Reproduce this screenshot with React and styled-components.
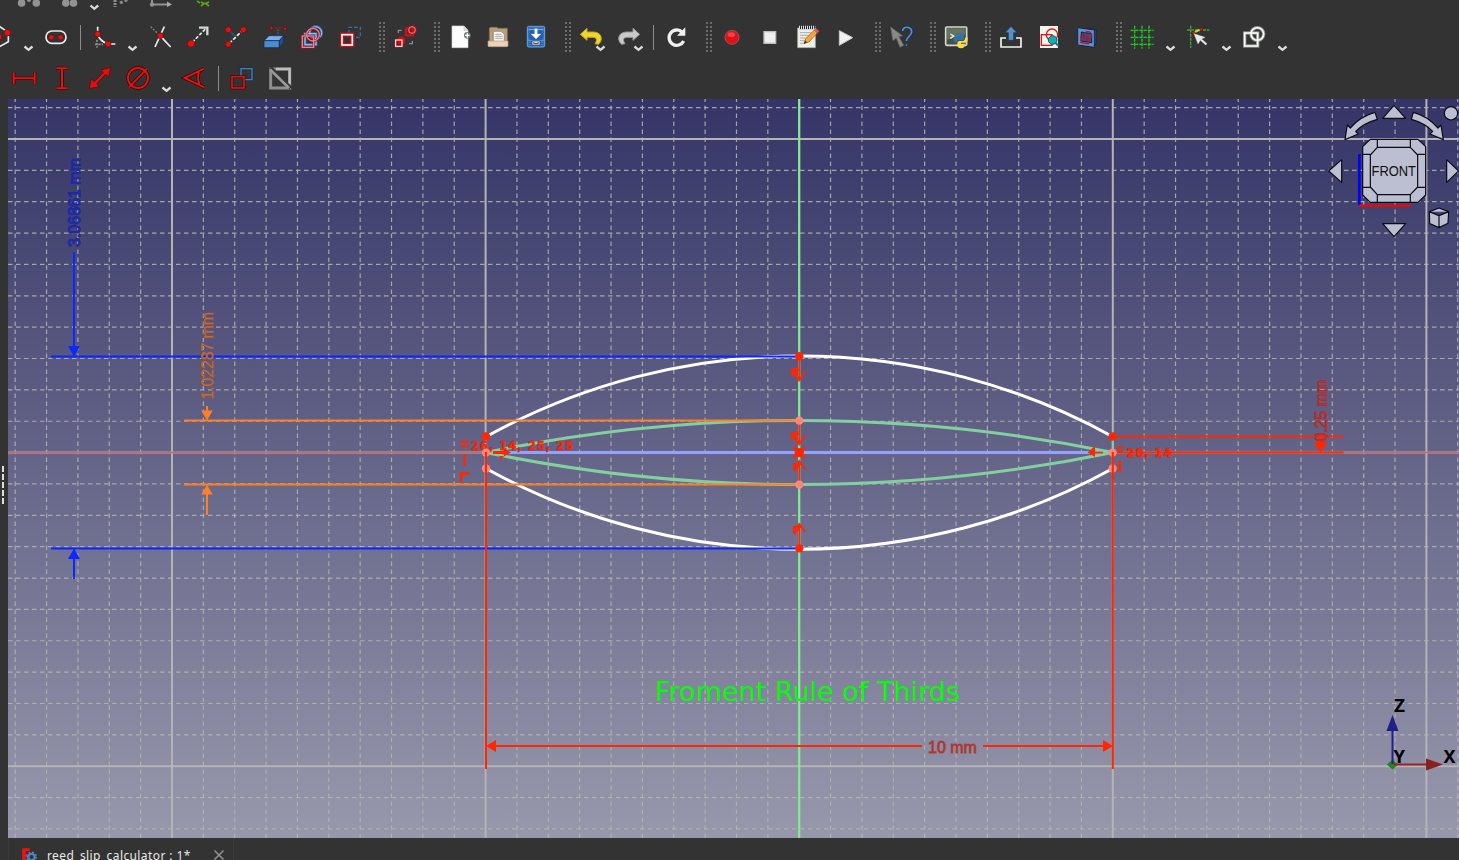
import React from "react";
import styled, { createGlobalStyle } from "styled-components";

const GlobalStyle = createGlobalStyle`
  body { margin: 0; background: #333333; overflow: hidden; }
  #root { height: 100vh; }
`;

const Window = styled.div`
  height: 860px;
  width: 1459px;
  overflow: hidden;
  display: flex;
  flex-direction: column;
  background: #333333;
  font-family: "Noto Sans", "Open Sans", sans-serif;
`;
const ToolBars = styled.header`
  display: flex;
  flex-direction: column;
  flex: 0 0 99px;
`;
const ToolRow = styled.div`
  display: flex;
  align-items: center;
  height: ${(p) => p.$height}px;
  margin-left: ${(p) => p.$start || 0}px;
  flex: none;
`;
const ToolButton = styled.span`
  position: relative;
  display: block;
  width: 38px;
  height: 38px;
  flex: none;
  svg { display: block; width: 38px; height: 38px; }
`;
const ClippedButton = styled.span`
  width: 38px;
  height: 17px;
  flex: none;
  margin-left: ${(p) => p.$gap || 0}px;
  svg { display: block; width: 38px; height: 17px; }
`;
const MenuArrow = styled.span`
  width: 18px;
  height: 29px;
  display: flex;
  align-items: flex-end;
  justify-content: center;
  flex: none;
  svg { width: 11px; height: 8px; }
`;
const BadgeArrow = styled.span`
  position: absolute;
  right: 4px;
  bottom: 4px;
  width: 11px;
  height: 8px;
  svg { display: block; width: 11px; height: 8px; }
`;
const Separator = styled.span`
  flex: none;
  width: 10px;
  display: flex;
  justify-content: center;
  &::after { content: ""; width: 1px; height: 25px; background: #8c8c8c; }
`;
const Handle = styled.span`
  flex: none;
  width: 6px;
  height: 30px;
  margin: 0 1px 0 10px;
  background: radial-gradient(circle at 1px 1px, #6c6c6c 1px, transparent 1.4px) 0 0 / 4px 4px;
`;
const Main = styled.main`
  display: flex;
  flex: 0 0 739px;
`;
const Splitter = styled.aside`
  flex: 0 0 8px;
  display: flex;
  flex-direction: column;
  align-items: flex-start;
  padding: 367px 0 0 2px;
  box-sizing: border-box;
  gap: 2px;
`;
const Grip = styled.i`
  width: 2px;
  height: 6px;
  background: #dedede;
`;
const Viewport = styled.section`
  width: 1451px;
  height: 739px;
  background: linear-gradient(#343467, #9898ac);
  svg { display: block; }
`;
const TabBar = styled.footer`
  display: flex;
  flex: none;
  height: 34px;
  padding-left: 8px;
`;
const Tab = styled.div`
  display: flex;
  align-items: center;
  box-sizing: border-box;
  width: 226px;
  padding: 0 8px 0 13px;
  border-left: 1px solid #3b3b3b;
  border-right: 1px solid #3b3b3b;
  color: #e8e8e8;
  font-size: 12px;
  letter-spacing: 0.4px;
`;
const TabTitle = styled.span`
  flex: 1;
  margin-left: 9px;
  white-space: pre;
`;

const RED = "#e11414";
const DARK = "#300";
const Dot = ({ x, y, r = 9 }) => <circle cx={x} cy={y} r={r} fill="#e01212" stroke="#5d0d0d" strokeWidth="2" />;

const Art = ({ children }) => (
  <svg viewBox="-57 -57 114 114" fill="none">{children}</svg>
);
const Chevron = () => (
  <svg viewBox="0 0 11 8" fill="none"><path d="M1.5 2.5 5.5 5.8 9.5 2.5" stroke="#dcdcdc" strokeWidth="2.3" /></svg>
);

const icons = {
  polygon: <><path d="M-24-14 0-31 25-14V14L0 28-24 14Z" stroke="#e8eeea" strokeWidth="5" /><Dot x={22} y={-13} r={10} /><Dot x={-4} y={0} r={10} /></>,
  slot: <><rect x="-30" y="-18" width="60" height="37" rx="18" stroke="#e8eeea" strokeWidth="5" /><Dot x={-14} y={1} r={8} /><Dot x={14} y={1} r={8} /></>,
  fillet: <><path d="M-27 22H-3M-21 8V32" stroke="#8b8f8c" strokeWidth="5" strokeDasharray="7 3" /><path d="M-19-31V-9Q-14 12 12 21H34" stroke="#e8eeea" strokeWidth="5" /><Dot x={-19} y={-9} /><Dot x={12} y={21} /></>,
  trim: <><path d="M-28-31 0-4" stroke="#7b8a83" strokeWidth="4" strokeDasharray="6 4" /><path d="M13-31-15 30M0-4 32 30" stroke="#e8eeea" strokeWidth="5" /><Dot x={1} y={-4} /></>,
  extend: <><path d="M-17 16 24-26" stroke="#e8eeea" strokeWidth="5" strokeDasharray="10 5" /><path d="M3-28H28V-5" stroke="#d4dad6" strokeWidth="7" /><Dot x={-21} y={20} r={11} /></>,
  split: <><path d="M-20 19 20-20" stroke="#e8eeea" strokeWidth="5" strokeDasharray="11 5" /><path d="M-18-17-1-1" stroke="#2f568a" strokeWidth="6" strokeDasharray="6 2" /><Dot x={-23} y={-22} /><Dot x={22} y={-22} /><Dot x={-23} y={22} /></>,
  external: <><path d="M-8-27H30" stroke="#c11" strokeWidth="3" strokeDasharray="7 4" /><path d="M12-23V-2" stroke="#36649c" strokeWidth="4" strokeDasharray="6 3" /><Dot x={-8} y={-27} r={5} /><Dot x={33} y={-25} r={5} /><g stroke="#122b4a" strokeWidth="2"><path d="M-30 11-15-4H29L16 11Z" fill="#79afe8" /><path d="M-30 11H16V32H-30Z" fill="#4b8bcf" /><path d="M16 11 29-4V16L16 32Z" fill="#234f88" /></g></>,
  carbon: <><g stroke="#3c6fb8" strokeWidth="8"><circle cx="11" cy="-13" r="18" /><rect x="-21" y="-10" width="33" height="33" /></g><g stroke="#a9c8f2" strokeWidth="3"><circle cx="11" cy="-13" r="18" /><rect x="-21" y="-10" width="33" height="33" /></g><g stroke="#8e1d24" strokeWidth="7"><circle cx="3" cy="-7" r="19" /><rect x="-29" y="-3" width="34" height="34" /></g><g stroke="#f17f85" strokeWidth="4"><circle cx="3" cy="-7" r="19" /><rect x="-29" y="-3" width="34" height="34" /></g></>,
  move: <><path d="M-3-10V-29H31V1H12" stroke="#376bac" strokeWidth="4" strokeDasharray="11 6" /><rect x="-24" y="-7" width="31" height="31" stroke="#c30f15" strokeWidth="13" /><rect x="-24" y="-7" width="31" height="31" stroke="#fff" strokeWidth="5" /></>,
  switchGeo: <><g stroke="#c71219" strokeWidth="7"><rect x="3" y="-26" width="21" height="21" /><circle cx="21" cy="-21" r="10" /><rect x="-28" y="9" width="19" height="19" /><circle cx="-11" cy="11" r="9" /></g><g stroke="#f3b3b5" strokeWidth="2"><circle cx="21" cy="-21" r="10" /></g><rect x="-28" y="9" width="19" height="19" stroke="#fff" strokeWidth="3" /><path d="M-20-12V-20H-10M12 20H22V12" stroke="#84928b" strokeWidth="4" /></>,
  newDoc: <><path d="M-24-33H12L24-20V32H-24Z" fill="#fdfdfd" stroke="#d5d5d5" strokeWidth="2" /><path d="M12-33V-20H24" fill="#ddd" stroke="#bbb" strokeWidth="2" /><circle cx="22" cy="-5" r="10" fill="#6f7774" /><path d="M15-5H29M22-12V2" stroke="#fff" strokeWidth="4" /></>,
  open: <><path d="M-26-26Q-24-31-17-29H-4L0-26H28V22H-26Z" fill="#b79f7b" stroke="#85714f" strokeWidth="2" /><path d="M-14-17H10L19-8V14H-14Z" fill="#f5f5f0" stroke="#777" strokeWidth="2" /><path d="M-8-8H10M-8-2H14M-8 4H14" stroke="#aaa" strokeWidth="3" /><path d="M-30 12H30V26Q30 29 26 29H-27Q-30 29-30 26Z" fill="#ead2b8" stroke="#b89b7a" strokeWidth="2" /></>,
  save: <><rect x="-26" y="-32" width="52" height="62" rx="4" fill="#3570bd" stroke="#6ea3e4" strokeWidth="3" /><path d="M-22-22H22M-23 9H23" stroke="#8ab6ed" strokeWidth="3" /><rect x="-20" y="-20" width="40" height="29" fill="#2560ac" /><path d="M-4-25H4V-9H15L0 6-15-9H-4Z" fill="#fff" stroke="#ccc" /><rect x="-12" y="12" width="24" height="12" fill="#f1f1f1" stroke="#143463" strokeWidth="2" /><path d="M-7 16V19H7V16" stroke="#333" strokeWidth="3" /></>,
  undo: <path d="M-32-8-12-26V-15H8C35-14 36 12 22 22L12 20C20 8 17 1 5 1H-12V10Z" fill="#f0d432" stroke="#c9a70d" strokeWidth="3" />,
  redo: <path d="M32-8 12-26V-15H-8C-35-14-36 12-22 22L-12 20C-20 8-17 1-5 1H12V10Z" fill="#c9c9c9" stroke="#999" strokeWidth="3" />,
  refresh: <><path d="M16-14A23 23 0 1 0 20 12" stroke="#f0f0ef" strokeWidth="10" /><path d="M25-29V-4H0Z" fill="#f0f0ef" /></>,
  record: <><circle r="21" cy="1" fill="#df1017" stroke="#9d5555" strokeWidth="3" /><ellipse cx="-2" cy="-7" rx="11" ry="7" fill="#ff6666" opacity=".6" /></>,
  stop: <rect x="-18" y="-16" width="35" height="35" fill="#efefef" stroke="#bdbdbd" strokeWidth="4" />,
  edit: <><path d="M-31-27H22V32H-31Z" fill="#eeeeea" stroke="#b2b2ae" strokeWidth="2" /><path d="M-26-27H20" stroke="#222" strokeWidth="7" /><path d="M-27-28H22" stroke="#ddd" strokeWidth="12" strokeDasharray="3 3" /><path d="M-24-13H12M-24-5H7M-24 3H0M-24 11H-5M-24 19H-9" stroke="#aaa" strokeWidth="3" /><path d="M-12 20-7 5 19-21 28-12 3 15Z" fill="#f5a33a" stroke="#965d19" strokeWidth="2" /><path d="M18-21 24-26 34-17 28-12Z" fill="#e75561" /><path d="M-12 20-9 11-3 16Z" fill="#222" /></>,
  play: <path d="M-20-19 20 2-20 25Z" fill="#f1f1f1" stroke="#c9c9c9" strokeWidth="3" />,
  help: <><path d="M-31-30 5-3-7-2 8 25-3 31-14 3-24 11Z" fill="#868985" stroke="#676a66" strokeWidth="2" /><path d="M4-18C4-37 36-34 34-14 33-2 18-2 16 12" stroke="#163354" strokeWidth="9" /><path d="M5-18C5-35 34-32 32-15 31-2 17-2 16 12" stroke="#5b8bc6" strokeWidth="5" /><circle cx="16" cy="24" r="4" fill="#4679b5" stroke="#173353" strokeWidth="2" /></>,
  python: <><rect x="-31" y="-30" width="63" height="55" rx="3" fill="#465143" stroke="#d5d7d1" strokeWidth="5" /><path d="M-27-26H28V-8L-27 8Z" fill="#65745c" /><path d="M-17-9-7-3-17 4" stroke="#eee" strokeWidth="4" /><path d="M0 13V3Q0-2 5-2H11V-5H-1Q0-14 12-12 24-13 24-5V6Q24 10 18 10H7Q3 10 3 16H-1Q-9 13-8 5-7-1 0-1" fill="#3471aa" /><path d="M35 1Q36 15 30 17H15V20H27Q28 33 15 34 4 34 4 25V19Q4 12 11 12H22Q27 11 27 3Z" fill="#ffd845" /></>,
  upload: <><path d="M-15 3H-30V30H30V3H15" stroke="#f3f3ef" strokeWidth="5" /><path d="M0-32 18-13H8V10H-8V-13H-18Z" fill="#5c8dcb" stroke="#163557" strokeWidth="2" /></>,
  validate: <><path d="M-27-33H27V33H-27Z" fill="#f4f4ef" /><rect x="-23" y="-7" width="32" height="32" stroke={RED} strokeWidth="4" /><circle cx="9" cy="-7" r="17" stroke={RED} strokeWidth="4" /><path d="M17 15 29 27" stroke="#087f83" strokeWidth="6" /><circle cx="11" cy="9" r="13" fill="#16acaf" stroke="#086468" strokeWidth="3" /></>,
  section: <><path d="M-2-27 27-23V22L8 26Z" fill="#275089" stroke="#132744" strokeWidth="3" /><path d="M-28-28 22-21V31L-28 24Z" fill="#5c91d1" stroke="#14294b" strokeWidth="3" /><path d="M-17-15 14-10V17L-17 12Z" fill="#23578f" stroke="#111d3a" strokeWidth="3" /><path d="M-18-3 4 0V20L-18 17Z" stroke="#bd1222" strokeWidth="4" /><ellipse cx="2" cy="-4" rx="12" ry="12" stroke="#bd1222" strokeWidth="4" /></>,
  grid: <><path d="M-22-34V35M0-34V35M21-34V35M-34-20H35M-34 1H35M-34 22H35" stroke="#1b6a1e" strokeWidth="5" /><path d="M-22-34V35M0-34V35M21-34V35M-34-20H35M-34 1H35M-34 22H35" stroke="#38c83b" strokeWidth="3" strokeDasharray="9 4" /></>,
  snap: <><path d="M-22-34V33M-33-21H34" stroke="#37ad3a" strokeWidth="4" strokeDasharray="9 3" /><path d="M-14-13 10-24" stroke="#bce51d" strokeWidth="6" /><Dot x={-14} y={-13} r={5} /><Dot x={10} y={-24} r={5} /><path d="M-12-10 21 1 11 6 27 20 23 24 7 10 0 21Z" fill="#e8e9e5" stroke="#e8e9e5" strokeWidth="1" /></>,
  order: <><g stroke="#919691" strokeWidth="10"><rect x="-28" y="-12" width="39" height="39" /><circle cx="10" cy="-9" r="19" /></g><g stroke="#fff" strokeWidth="4.5"><rect x="-28" y="-12" width="39" height="39" /><circle cx="10" cy="-9" r="19" /></g></>,
};
const dim = (d) => <><path d={d} stroke={DARK} strokeWidth="10" /><path d={d} stroke={RED} strokeWidth="6" /></>;
Object.assign(icons, {
  dimH: dim("M-31-17V19M32-17V19M-30 1H31"),
  dimV: dim("M0-29V31M-17-29H17M-17 31H17"),
  dimD: <path d="M-32 32-27 3-17 11 10-16 2-24 32-32 26-2 17-11-10 17-2 26Z" fill="#dd1111" stroke="#710b0b" strokeWidth="3" />,
  diameter: <>{dim("M30 0A30 30 0 1 1-30 0 30 30 0 0 1 30 0ZM-27 28 27-28")}</>,
  angle: dim("M30-28-28 0 31 28M15-20Q9 0 16 19"),
  reference: <><rect x="-3" y="-28" width="33" height="33" stroke="#122d4c" strokeWidth="7" /><rect x="-3" y="-28" width="33" height="33" stroke="#477fbd" strokeWidth="4" /><rect x="-30" y="-4" width="36" height="34" fill="#333" stroke={DARK} strokeWidth="8" /><rect x="-30" y="-4" width="36" height="34" stroke={RED} strokeWidth="5" /></>,
  toggle: <><rect x="-28" y="-27" width="57" height="57" stroke="#8f8f8f" strokeWidth="9" /><path d="M-12-27H29V18" stroke="#bfbfbf" strokeWidth="7" /><path d="M-29-31 32 30" stroke="#333" strokeWidth="11" /><path d="M-30-26 27 30" stroke="#9a9a9a" strokeWidth="8" /></>,
});

const Tool = ({ name, menu }) => (
  <ToolButton><Art>{icons[name]}</Art>{menu && <BadgeArrow><Chevron /></BadgeArrow>}</ToolButton>
);
const Menu = () => <MenuArrow><Chevron /></MenuArrow>;
const Tools = ({ names }) => names.map((n) => <Tool key={n} name={n} />);

const ClippedRow = () => (
  <ToolRow $height={17} $start={10}>
    <ClippedButton><svg viewBox="0 0 38 17" fill="#929292"><circle cx="11.6" cy="3" r="3.8" /><circle cx="26.3" cy="3" r="3.8" /><circle cx="19" cy="0" r="2" /></svg></ClippedButton>
    <ClippedButton $gap={2}><svg viewBox="0 0 38 17" fill="#929292"><circle cx="15.8" cy="3" r="3.8" /><circle cx="23.5" cy="3" r="3.8" /></svg></ClippedButton>
    <ClippedButton $gap={-13}><svg viewBox="0 0 38 17" fill="none"><path d="M15.5 5.5 19.3 8.8 23.2 5.5" stroke="#dcdcdc" strokeWidth="2.3" /></svg></ClippedButton>
    <ClippedButton $gap={-11}><svg viewBox="0 0 38 17" fill="none"><path d="M13 0V7" stroke="#8c8c8c" strokeWidth="3" strokeDasharray="2 1" /><path d="M18 3 27-1" stroke="#8c8c8c" strokeWidth="3" strokeDasharray="3 2" /></svg></ClippedButton>
    <ClippedButton $gap={1}><svg viewBox="0 0 38 17"><path d="M11 0V4.5H28" fill="none" stroke="#929292" strokeWidth="2" /><circle cx="11" cy="4.5" r="2.2" fill="#929292" /><path d="M26 1.5 31 4.5 26 7Z" fill="#aaa" /></svg></ClippedButton>
    <ClippedButton $gap={7}><svg viewBox="0 0 38 17" fill="none" stroke="#59a514" strokeWidth="1.8"><path d="M11 1 14 3M15 2 18 3.5 15 6M23 2 19.5 3.5 23 6" /></svg></ClippedButton>
  </ToolRow>
);

const PITCH = 31.36;
const CX = 799.2;
const CY = 452.6;
const range = (a, b) => Array.from({ length: b - a + 1 }, (_, i) => a + i);

const GridLines = () => (
  <g stroke="#b4b4b4">
    {range(-25, 21).map((k) => {
      const x = CX + k * PITCH;
      const major = k % 10 === 0;
      return <line key={"v" + k} x1={x} x2={x} y1="838" y2="99" strokeWidth={major ? 2 : 1.2} strokeDasharray={major ? undefined : "4.5 3.5"} opacity={major ? 1 : 0.88} />;
    })}
    {range(-11, 12).map((k) => {
      const y = CY + k * PITCH;
      const major = k % 10 === 0;
      return <line key={"h" + k} y1={y} y2={y} x1="8" x2="1459" strokeWidth={major ? 2 : 1.2} strokeDasharray={major ? undefined : "4.5 3.5"} opacity={major ? 1 : 0.88} />;
    })}
  </g>
);

const FIRE = "#ff2600";
const BLUE = "#0a28ff";
const ORANGE = "#ff7f24";

const Dimensions = () => (
  <g strokeWidth="2">
    <g stroke={BLUE} fill={BLUE}>
      <path d="M51 356.4H799M51 548.4H799M74 252V350M74 553V579" />
      <path stroke="none" d="M68 346H80L74 356.5ZM68 559H80L74 548.5Z" />
    </g>
    <g stroke={ORANGE} fill={ORANGE}>
      <path d="M184 420.6H799M184 484.6H799M207 406V415M207 489V515" />
      <path stroke="none" d="M201.3 410.5H212.7L207 420.5ZM201.3 494.5H212.7L207 484.7Z" />
    </g>
    <g stroke={FIRE} fill={FIRE}>
      <path d="M486 452V769M1112.8 452V769M490 746H922M983 746H1108M1113 436.5H1343.5M1113 452.5H1343.5M1320.5 436V448" />
      <path stroke="none" d="M486 746 496 740V752ZM1113 746 1103 740V752ZM1314.5 442H1326.5L1320.5 452.5ZM1314.5 447 1320.5 436 1326.5 447Z" />
    </g>
  </g>
);

const DimText = styled.text`
  font: 16px "Liberation Sans", Arial, sans-serif;
  fill: ${(p) => p.$fill};
  stroke: ${(p) => p.$edge};
  stroke-width: 0.9px;
  paint-order: stroke;
`;
const MarkText = styled.text`
  font: bold 11.5px "DejaVu Sans", sans-serif;
  fill: ${FIRE};
  stroke: #a02020;
  stroke-width: 0.5px;
  paint-order: stroke;
`;
const NoteText = styled.text`
  font: 27px "DejaVu Sans", sans-serif;
  fill: #00ff00;
`;
const AxisText = styled.text`
  font: bold 18px "Noto Sans", sans-serif;
  fill: #000;
`;
const CubeText = styled.text`
  font: 14px "Liberation Sans", Arial, sans-serif;
  fill: #111;
`;

const Geometry = () => (
  <g fill="none">
    <path d="M8 452.5H1459" stroke="#c96368" strokeWidth="1.6" />
    <path d="M799.2 99V838" stroke="#7df08a" strokeWidth="2" />
    <path d="M486 452.5H1113" stroke="#93a2ff" strokeWidth="3" />
    <path d="M1112.8 437V468" stroke="#84cf9f" strokeWidth="2" />
    <g stroke="#fff" strokeWidth="3">
      <path d="M486 436.7A648.8 648.8 0 0 1 1112.8 436.7M486 468.5A648.8 648.8 0 0 0 1112.8 468.5" />
    </g>
    <g stroke="#82cfa0" strokeWidth="3">
      <path d="M486 452.5A1547 1547 0 0 1 1112.8 452.5M486 452.5A1547 1547 0 0 0 1112.8 452.5" />
    </g>
  </g>
);

const OnObject = ({ y, up }) => (
  <g transform={`translate(799.2 ${y})`} stroke={FIRE} fill="none" strokeWidth="1.8">
    {up ? (
      <><path d="M0 24V0M-6 8 0 0 6 8M-5 10 0 4" /><path d="M-6 2H2V4H-4L-4 10H-6Z" fill={FIRE} stroke="none" /></>
    ) : (
      <><path d="M0-20V3M-6-5 0 3.5 6-6M-7-8-1 1M-7-2-1-8" /><path d="M-8-9H-1V-7L-6-6V-1H-8Z" fill={FIRE} stroke="none" /></>
    )}
  </g>
);

const Constraints = () => (
  <g fill={FIRE}>
    <OnObject y={377} />
    <OnObject y={441} />
    <OnObject y={461} up />
    <OnObject y={524} up />
    <path d="M460.5 440.5H468.5V442.8H460.5ZM460.5 445H468.5V447.3H460.5ZM463.5 454H465.7V466H463.5ZM460 472H470V474L463 475 461.5 482H459.5Z" />
    <path d="M493 451H504V448.5L511 452.5 504 456.5V454H493ZM499 456H504L501 459.5Z" />
    <path d="M1103 451.7H1095V446L1087.5 452.5 1095 457V453.5H1103Z" />
    <path d="M1116 446.5H1123V448.5H1116ZM1116 450.5H1123V452.2H1116ZM1118.3 460.5H1121V472.5H1118.3Z" />
    <MarkText x="471" y="449.5" textLength="102">26, 14, 25, 25</MarkText>
    <MarkText x="1126.5" y="457" textLength="45">26, 14</MarkText>
    <circle cx="486" cy="436.5" r="4.2" /><circle cx="1112.6" cy="436.5" r="4.2" />
    <circle cx="799.3" cy="356.3" r="4.2" /><circle cx="799.3" cy="548.4" r="4.2" />
    <g fill="#ff877a">
      <circle cx="486" cy="452.6" r="4.2" /><circle cx="486" cy="468.5" r="4.2" />
      <circle cx="1112.6" cy="452.6" r="4.2" /><circle cx="1112.6" cy="468.5" r="4.2" />
      <circle cx="799.3" cy="420.6" r="4.2" /><circle cx="799.3" cy="484.6" r="4.2" />
    </g>
    <path d="M486 452V480M1112.8 452V480" stroke={FIRE} strokeWidth="2" />
    <circle cx="799.3" cy="452.6" r="4.7" />
    <path d="M793.5 447 805 458M805 447 793.5 458" stroke={FIRE} strokeWidth="2.5" />
  </g>
);

const NavCube = () => (
  <g transform="translate(1320 95) scale(.33333)" fill="#bcbfd2" stroke="#0c0c14" strokeWidth="3.6" strokeLinejoin="round">
    <path d="M222 31 257 70H188ZM222 425 257 386H188ZM26 228 65 194V262ZM416 228 380 194V262Z" />
    <path d="M165 52 172 73Q132 84 107 109L115 117 75 134 82 90 91 99Q122 63 165 52Z" />
    <path d="M280 52 274 73Q314 84 338 109L330 117 370 134 363 90 354 99Q323 63 280 52Z" />
    <circle cx="393" cy="55" r="20" />
    <path d="M328 350 357 339 386 350 384 385 357 398 329 386ZM328 350 357 362 386 350M357 362V398" />
    <path d="M118 178V330" stroke="#0000ff" strokeWidth="8" />
    <path d="M118 332H272" stroke="#ff0000" strokeWidth="7" />
    <path d="M151 133H294L317 155V300L294 322H151L128 300V155Z" />
    <path d="M172 157H271L293 180V276L271 299H172L151 276V180ZM172 133V157M271 133V157M172 299V322M271 299V322M128 178H151M293 178H317M128 277H151M293 277H317" fill="none" />
  </g>
);

const AxisCross = () => (
  <g>
    <path d="M1387 764.5 1392.5 759.5 1398 764.5 1392.5 769.5Z" fill="#218421" />
    <path d="M1392.5 764V729" stroke="#202090" strokeWidth="2" /><path d="M1386.5 731H1398.5L1392.5 715Z" fill="#202088" />
    <path d="M1394 764.5H1427" stroke="#982424" strokeWidth="2" /><path d="M1426 758.5V770.5L1443 764.5Z" fill="#882020" />
    <AxisText x="1394" y="711.5" textLength="11" lengthAdjust="spacingAndGlyphs">Z</AxisText>
    <AxisText x="1393.5" y="762.5" textLength="11.5" lengthAdjust="spacingAndGlyphs">Y</AxisText>
    <AxisText x="1443.5" y="762.5">X</AxisText>
  </g>
);

const Sketch = () => (
  <svg width="1451" height="739" viewBox="8 99 1451 739">
    <GridLines />
    <Geometry />
    <Dimensions />
    <Constraints />
    <DimText $fill="#1a2cb4" $edge="#1c2488" transform="translate(80 247) rotate(-90)">3.06861 mm</DimText>
    <DimText $fill="#c8682f" $edge="#855548" transform="translate(213.3 399.5) rotate(-90)" textLength="87.5">1.02287 mm</DimText>
    <DimText $fill="#cc2c20" $edge="#8c3040" transform="translate(1327 441.5) rotate(-90)" textLength="61.5">0.25 mm</DimText>
    <DimText $fill="#b83428" $edge="#9a4a4a" x="928" y="752.5">10 mm</DimText>
    <NoteText x="655" y="701" textLength="305">Froment Rule of Thirds</NoteText>
    <NavCube />
    <CubeText x="1371.5" y="176" textLength="44.5" lengthAdjust="spacingAndGlyphs">FRONT</CubeText>
    <AxisCross />
  </svg>
);

const AppIcon = () => (
  <svg width="16" height="16" viewBox="0 0 16 16">
    <path d="M0 1H8V4.5H4V7H7V10H4V15H0Z" fill="#e01a1a" stroke="#8c0c0c" strokeWidth=".5" />
    <circle cx="9.5" cy="10" r="3.2" fill="none" stroke="#4d86c9" strokeWidth="2.2" />
    <circle cx="9.5" cy="10" r="4.8" fill="none" stroke="#4d86c9" strokeWidth="1.5" strokeDasharray="1.9 1.87" />
  </svg>
);

export default function App() {
  return (
    <Window>
      <GlobalStyle />
      <ToolBars>
        <ClippedRow />
        <ToolRow $height={40} $start={-19}>
          <Tool name="polygon" /><Menu /><Tool name="slot" />
          <Separator />
          <Tool name="fillet" /><Menu />
          <Tools names={["trim", "extend", "split", "external", "carbon", "move"]} />
          <Handle /><Tool name="switchGeo" />
          <Handle /><Tools names={["newDoc", "open", "save"]} />
          <Handle /><Tool name="undo" menu /><Tool name="redo" menu />
          <Separator /><Tool name="refresh" />
          <Handle /><Tools names={["record", "stop", "edit", "play"]} />
          <Handle /><Tool name="help" />
          <Handle /><Tool name="python" />
          <Handle /><Tools names={["upload", "validate", "section"]} />
          <Handle /><Tool name="grid" /><Menu /><Tool name="snap" /><Menu /><Tool name="order" /><Menu />
        </ToolRow>
        <ToolRow $height={42} $start={5}>
          <Tools names={["dimH", "dimV", "dimD", "diameter"]} /><Menu />
          <Tool name="angle" /><Separator />
          <Tools names={["reference", "toggle"]} />
        </ToolRow>
      </ToolBars>
      <Main>
        <Splitter><Grip /><Grip /><Grip /><Grip /><Grip /></Splitter>
        <Viewport><Sketch /></Viewport>
      </Main>
      <TabBar>
        <Tab>
          <AppIcon />
          <TabTitle>reed_slip_calculator : 1*</TabTitle>
          <svg width="12" height="12" viewBox="0 0 12 12"><path d="M1.5 1.5 10.5 10.5M10.5 1.5 1.5 10.5" stroke="#8f8f8f" strokeWidth="1.6" /></svg>
        </Tab>
      </TabBar>
    </Window>
  );
}
